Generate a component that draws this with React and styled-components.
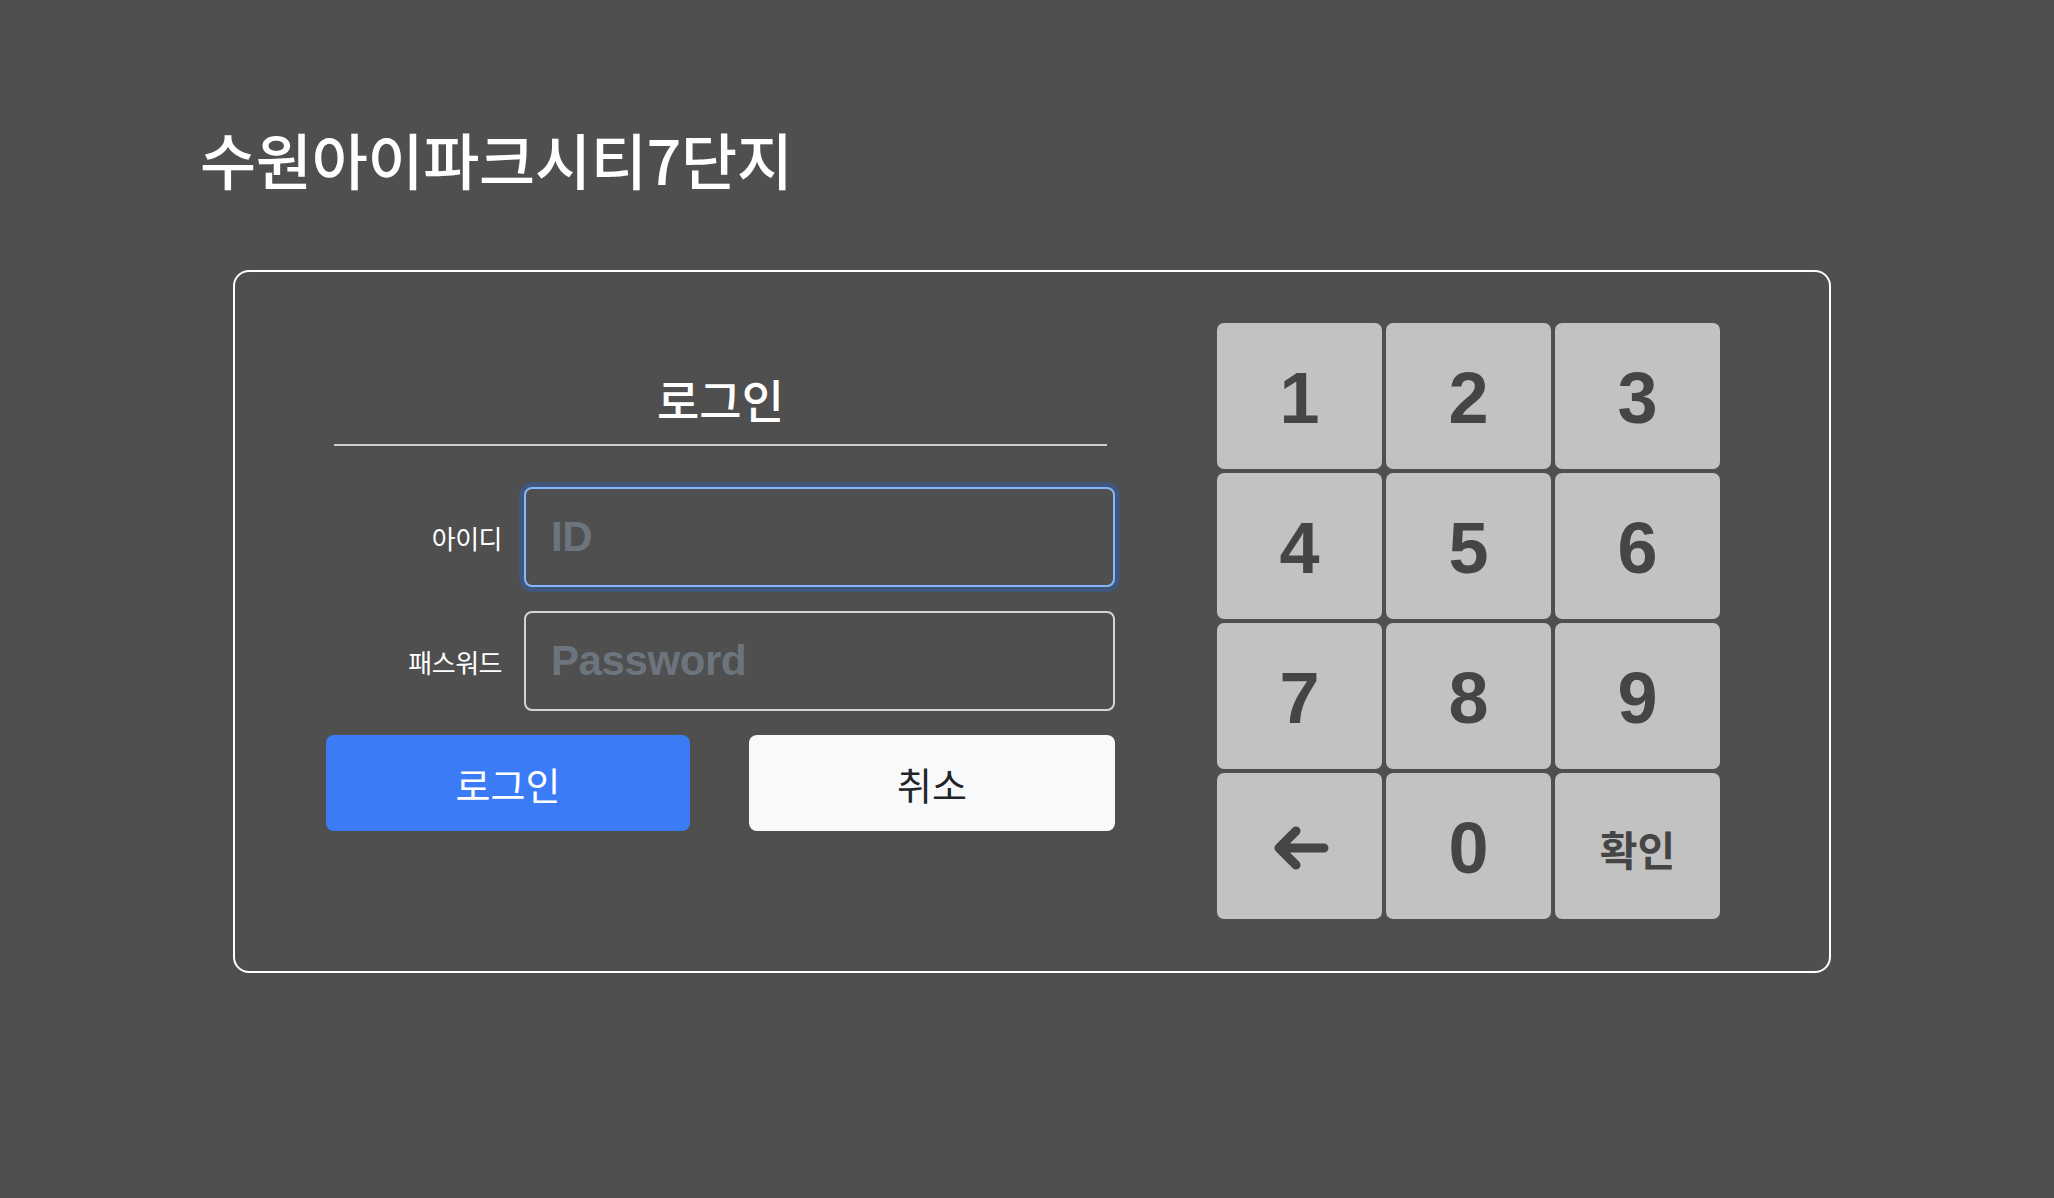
import React from "react";
import styled, { createGlobalStyle } from "styled-components";

const GlobalStyle = createGlobalStyle`
  html, body {
    margin: 0;
    padding: 0;
    background: #4f4f4f;
  }
  body {
    font-family: "Noto Sans CJK KR", "Noto Sans", sans-serif;
    color: #fff;
  }
  * { box-sizing: border-box; }
`;

const Page = styled.div`
  min-height: 1198px;
  padding: 123px 0 0 200px;
`;

const Title = styled.h1`
  margin: 0 0 75px 0;
  font-size: 61px;
  line-height: 72px;
  font-weight: 500;
  letter-spacing: -0.3px;
  color: #fff;
`;

const Card = styled.div`
  width: 1598px;
  margin-left: 33px;
  border: 2px solid #fff;
  border-radius: 16px;
  display: flex;
  align-items: flex-start;
  gap: 102px;
  padding: 51px 109px 52px 91px;
`;

const Form = styled.form`
  width: 789px;
  padding-top: 49px;
  display: flex;
  flex-direction: column;
`;

const Heading = styled.h2`
  margin: 0 0 20px 0;
  text-align: center;
  font-size: 46px;
  line-height: 52px;
  font-weight: 500;
  color: #fff;
`;

const Divider = styled.hr`
  margin: 0 8px 41px;
  border: none;
  border-top: 2px solid #cfcfcf;
`;

const FieldRow = styled.div`
  display: grid;
  grid-template-columns: 176px 1fr;
  column-gap: 22px;
  align-items: center;
  margin-bottom: 24px;
`;

const Label = styled.label`
  text-align: right;
  font-size: 26px;
  letter-spacing: -0.5px;
  color: #fff;
`;

const Input = styled.input`
  height: 100px;
  width: 100%;
  padding: 0 25px;
  background: transparent;
  border: 2px solid ${(p) => (p.$focused ? "#86b7fe" : "#d4d4d4")};
  border-radius: 8px;
  box-shadow: ${(p) => (p.$focused ? "0 0 0 5px rgba(13,110,253,0.25)" : "none")};
  color: #fff;
  font-family: "Liberation Sans", Arial, sans-serif;
  font-weight: 700;
  font-size: 42px;
  letter-spacing: -0.4px;
  outline: none;
  &::placeholder {
    color: #6c757d;
    opacity: 1;
  }
`;

const Buttons = styled.div`
  display: grid;
  grid-template-columns: 364px 366px;
  justify-content: space-between;
`;

const Button = styled.button`
  height: 96px;
  border: none;
  border-radius: 8px;
  background: ${(p) => (p.$primary ? "#3b7cf6" : "#f8f9fa")};
  color: ${(p) => (p.$primary ? "#fff" : "#212529")};
  font-family: "Noto Sans CJK KR", sans-serif;
  font-size: 38px;
  font-weight: 400;
  cursor: pointer;
`;

const Keypad = styled.div`
  display: grid;
  grid-template-columns: repeat(3, 165px);
  grid-auto-rows: 146px;
  column-gap: 4px;
  row-gap: 4px;
`;

const Key = styled.button`
  border: none;
  border-radius: 7px;
  background: #c2c2c2;
  color: #454545;
  font-family: ${(p) =>
    p.$korean ? '"Noto Sans CJK KR", sans-serif' : '"Liberation Sans", Arial, sans-serif'};
  font-weight: 700;
  font-size: ${(p) => (p.$korean ? "41px" : "72px")};
  display: flex;
  align-items: center;
  justify-content: center;
  padding: 4px 0 0;
  cursor: pointer;
`;

const BackArrow = () => (
  <svg width="60" height="50" viewBox="0 0 60 50" fill="none">
    <path
      d="M54 25H9M26 8L9 25L26 42"
      stroke="#454545"
      strokeWidth="9"
      strokeLinecap="round"
      strokeLinejoin="round"
    />
  </svg>
);

export default function App() {
  const digits = ["1", "2", "3", "4", "5", "6", "7", "8", "9"];
  return (
    <>
      <GlobalStyle />
      <Page>
        <Title>수원아이파크시티7단지</Title>
        <Card>
          <Form onSubmit={(e) => e.preventDefault()}>
            <Heading>로그인</Heading>
            <Divider />
            <FieldRow>
              <Label>아이디</Label>
              <Input $focused placeholder="ID" />
            </FieldRow>
            <FieldRow>
              <Label>패스워드</Label>
              <Input type="password" placeholder="Password" />
            </FieldRow>
            <Buttons>
              <Button $primary type="submit">로그인</Button>
              <Button type="button">취소</Button>
            </Buttons>
          </Form>
          <Keypad>
            {digits.map((d) => (
              <Key key={d}>{d}</Key>
            ))}
            <Key aria-label="back">
              <BackArrow />
            </Key>
            <Key>0</Key>
            <Key $korean>확인</Key>
          </Keypad>
        </Card>
      </Page>
    </>
  );
}
